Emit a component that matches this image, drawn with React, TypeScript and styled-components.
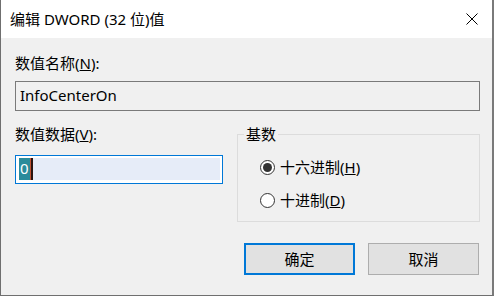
import styled, { createGlobalStyle } from "styled-components";

const GlobalStyle = createGlobalStyle`
  html, body {
    margin: 0;
    padding: 0;
    background: #ffffff;
  }
  body {
    font-family: "Segoe UI", "Noto Sans", "Noto Sans CJK SC", sans-serif;
    color: #000;
  }
`;

const Window = styled.div`
  box-sizing: border-box;
  width: 494px;
  height: 296px;
  background: #f0f0f0;
  border-left: 1px solid #6f6f6f;
  border-right: 2px solid #7a7a7a;
  border-bottom: 1px solid #6f6f6f;
  display: flex;
  flex-direction: column;
`;

const TitleBar = styled.div`
  height: 38px;
  background: #ffffff;
  display: flex;
  align-items: center;
  justify-content: space-between;
  padding: 0 14px 0 9px;
  flex-shrink: 0;
`;

const Title = styled.div`
  font-size: 15px;
  line-height: 20px;
  margin-top: -1px;
`;

const CloseButton = styled.div`
  width: 12px;
  height: 12px;
  display: flex;
  margin-top: -1px;
`;

const Body = styled.div`
  padding: 0 12px 0 14px;
  display: flex;
  flex-direction: column;
`;

const Label = styled.div<{ $top: number; $bottom: number }>`
  font-size: 15px;
  line-height: 20px;
  margin-top: ${p => p.$top}px;
  margin-bottom: ${p => p.$bottom}px;
`;

const NameBox = styled.div`
  box-sizing: border-box;
  height: 30px;
  border: 1px solid #7a7a7a;
  background: #f0f0f0;
  font-size: 15px;
  line-height: 27px;
  padding-left: 4px;
`;

const Row = styled.div`
  display: grid;
  grid-template-columns: 208px 243px;
  justify-content: space-between;
  align-items: start;
  margin-top: 13px;
`;

const DataBox = styled.div`
  box-sizing: border-box;
  height: 29px;
  border: 1px solid #0078d7;
  background: #ffffff;
  padding: 2px 2px 3px 3px;
  display: flex;
`;

const DataFill = styled.div`
  flex: 1;
  background: #e6ecf8;
  display: flex;
  align-items: stretch;
  font-size: 15px;
  line-height: 21px;
`;

const Selected = styled.span`
  background: #2b8b9b;
  color: #ffffff;
  padding: 0 1px;
`;

const Caret = styled.span`
  width: 2px;
  background: #2a1410;
  border-left: 1px solid #c05030;
`;

const GroupBox = styled.fieldset`
  box-sizing: border-box;
  margin: 0;
  margin-top: 2px;
  height: 96px;
  border: 1px solid #dcdcdc;
  padding: 0;
  display: flex;
  flex-direction: column;
  gap: 13px;
`;

const Legend = styled.legend`
  font-size: 15px;
  line-height: 16px;
  padding: 0 2px;
  margin-left: 6px;
`;

const RadioRow = styled.div<{ $first?: boolean }>`
  display: flex;
  align-items: center;
  gap: 5px;
  margin-left: 22px;
  font-size: 15px;
  line-height: 20px;
  margin-top: ${p => (p.$first ? "15px" : "0")};
`;

const RadioCircle = styled.span<{ $checked: boolean }>`
  box-sizing: border-box;
  width: 15px;
  height: 15px;
  border-radius: 50%;
  border: 1px solid #333333;
  background: #ffffff;
  display: flex;
  align-items: center;
  justify-content: center;
  &::after {
    content: "";
    display: ${p => (p.$checked ? "block" : "none")};
    width: 9px;
    height: 9px;
    border-radius: 50%;
    background: #333333;
  }
`;

const ButtonRow = styled.div`
  display: flex;
  justify-content: flex-end;
  gap: 13px;
  margin-top: 21px;
  padding-right: 1px;
`;

const Button = styled.div<{ $default?: boolean }>`
  box-sizing: border-box;
  width: 111px;
  height: 32px;
  background: #e1e1e1;
  border: ${p => (p.$default ? "2px solid #0078d7" : "1px solid #adadad")};
  display: flex;
  align-items: center;
  justify-content: center;
  font-size: 15px;
  line-height: 20px;
`;

export default function App() {
  return (
    <>
      <GlobalStyle />
      <Window>
        <TitleBar>
          <Title>编辑 DWORD (32 位)值</Title>
          <CloseButton>
            <svg width="12" height="12" viewBox="0 0 12 12">
              <path d="M0.5 0.5 L11.5 11.5 M11.5 0.5 L0.5 11.5" stroke="#000" strokeWidth="1" fill="none" />
            </svg>
          </CloseButton>
        </TitleBar>
        <Body>
          <Label $top={15} $bottom={8}>数值名称(<u>N</u>):</Label>
          <NameBox>InfoCenterOn</NameBox>
          <Row>
            <div>
              <Label $top={0} $bottom={11}>数值数据(<u>V</u>):</Label>
              <DataBox>
                <DataFill>
                  <Selected>0</Selected>
                  <Caret />
                </DataFill>
              </DataBox>
            </div>
            <GroupBox>
              <Legend>基数</Legend>
              <RadioRow $first>
                <RadioCircle $checked />
                <span>十六进制(<u>H</u>)</span>
              </RadioRow>
              <RadioRow>
                <RadioCircle $checked={false} />
                <span>十进制(<u>D</u>)</span>
              </RadioRow>
            </GroupBox>
          </Row>
          <ButtonRow>
            <Button $default>确定</Button>
            <Button>取消</Button>
          </ButtonRow>
        </Body>
      </Window>
    </>
  );
}
